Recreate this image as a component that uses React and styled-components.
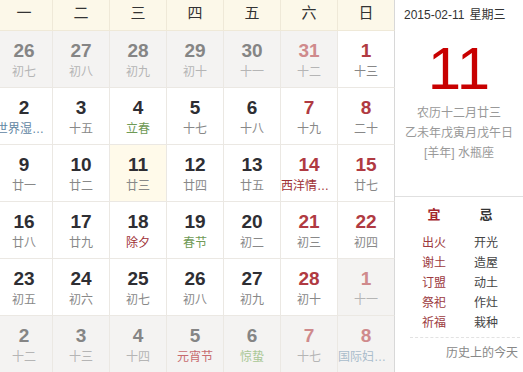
import React from "react";
import styled, { createGlobalStyle } from "styled-components";

const Global = createGlobalStyle`
  html, body { margin: 0; padding: 0; background: #fff; }
  body {
    width: 523px; height: 372px; overflow: hidden;
    font-family: "Liberation Sans", Arial, "Noto Sans CJK SC", sans-serif;
  }
`;

const Page = styled.div`
  display: flex;
  width: 523px;
  height: 372px;
  overflow: hidden;
`;

const Grid = styled.div`
  flex: none;
  margin-left: -4px;
  width: 399px;
  display: grid;
  grid-template-columns: repeat(7, 57px);
  grid-template-rows: 31px repeat(6, 57px);
`;

const HeadCell = styled.div`
  box-sizing: border-box;
  background: #fcf8e9;
  border-right: 1px solid ${(p) => (p.$last ? "#d8d8d8" : "#efe9d8")};
  border-bottom: 1px solid #efe9d8;
  text-align: center;
  font-size: 15px;
  line-height: 25px;
  color: #333;
`;

const DayCell = styled.div`
  box-sizing: border-box;
  background: ${(p) => (p.$today ? "#fffaea" : p.$other ? "#f4f3f2" : "#fff")};
  border-right: 1px solid ${(p) => (p.$last ? "#d8d8d8" : "#ebe8e3")};
  border-bottom: 1px solid #ebe8e3;
  padding-top: 9px;
  text-align: center;
  overflow: hidden;
`;

const Num = styled.div`
  font-size: 19px;
  font-weight: bold;
  line-height: 22px;
  color: ${(p) => p.$color};
`;

const Lunar = styled.div`
  font-size: 12px;
  line-height: 20px;
  color: ${(p) => p.$color};
  white-space: nowrap;
  overflow: hidden;
  text-overflow: ellipsis;
`;

const Side = styled.div`
  flex: none;
  width: 128px;
  display: flex;
  flex-direction: column;
`;

const SideTop = styled.div`
  height: 196px;
  border-bottom: 1px solid #e0e0e0;
  display: flex;
  flex-direction: column;
`;

const DateLine = styled.div`
  margin: 5px 0 0 9px;
  font-size: 12px;
  line-height: 20px;
  color: #333;
  white-space: nowrap;
  span { margin-left: 5px; }
`;

const BigDay = styled.div`
  margin-top: 14px;
  text-align: center;
  font-size: 60px;
  line-height: 60px;
  color: #c80000;
`;

const LunarInfo = styled.div`
  margin-top: 4px;
  text-align: center;
  font-size: 12px;
  line-height: 20px;
  color: #999;
  white-space: nowrap;
`;

const SideBottom = styled.div`
  padding-top: 8px;
  display: flex;
  flex-direction: column;
`;

const YiJi = styled.div`
  display: grid;
  grid-template-columns: 52px 52px;
  padding-left: 13px;
`;

const YiJiHead = styled.div`
  text-align: center;
  font-size: 13px;
  font-weight: bold;
  line-height: 20px;
  margin-bottom: 8px;
  color: ${(p) => p.$color};
`;

const YiJiCol = styled.div`
  display: flex;
  flex-direction: column;
`;

const YiJiItem = styled.div`
  text-align: center;
  font-size: 12px;
  line-height: 20px;
  color: ${(p) => p.$color};
`;

const HistoryLink = styled.div`
  margin: 4px 3px 0 15px;
  border-top: 1px dashed #e2e2e2;
  padding: 5px 2px 0 0;
  text-align: right;
  font-size: 12px;
  line-height: 20px;
  color: #888;
`;

const heads = ["一", "二", "三", "四", "五", "六", "日"];

// kind: n normal, f-blue, f-green, f-red
const weeks = [
  [[26, "初七", 1], [27, "初八", 1], [28, "初九", 1], [29, "初十", 1], [30, "十一", 1], [31, "十二", 1], [1, "十三"]],
  [[2, "世界湿地日", 0, "blue"], [3, "十五"], [4, "立春", 0, "green"], [5, "十七"], [6, "十八"], [7, "十九"], [8, "二十"]],
  [[9, "廿一"], [10, "廿二"], [11, "廿三", 0, null, true], [12, "廿四"], [13, "廿五"], [14, "西洋情人节", 0, "red"], [15, "廿七"]],
  [[16, "廿八"], [17, "廿九"], [18, "除夕", 0, "red"], [19, "春节", 0, "green"], [20, "初二"], [21, "初三"], [22, "初四"]],
  [[23, "初五"], [24, "初六"], [25, "初七"], [26, "初八"], [27, "初九"], [28, "初十"], [1, "十一", 1]],
  [[2, "十二", 1], [3, "十三", 1], [4, "十四", 1], [5, "元宵节", 1, "red"], [6, "惊蛰", 1, "green"], [7, "十七", 1], [8, "国际妇女节", 1, "blue"]],
];

const festColors = {
  cur: { blue: "#5f86a3", green: "#6f9a56", red: "#9e3034" },
  other: { blue: "#a9bccb", green: "#a9c795", red: "#c76b6f" },
};

function numColor(other, weekend) {
  if (other) return weekend ? "#cf8a8c" : "#858585";
  return weekend ? "#b03a42" : "#2e2e33";
}

function lunarColor(other, fest) {
  if (fest) return festColors[other ? "other" : "cur"][fest];
  return other ? "#b5b5b5" : "#888";
}

const yi = ["出火", "谢土", "订盟", "祭祀", "祈福"];
const ji = ["开光", "造屋", "动土", "作灶", "栽种"];

export default function App() {
  return (
    <>
      <Global />
      <Page>
        <Grid>
          {heads.map((h, i) => (
            <HeadCell key={h} $last={i === 6}>{h}</HeadCell>
          ))}
          {weeks.map((w, wi) =>
            w.map(([n, l, other, fest, today], di) => {
              const weekend = di >= 5;
              return (
                <DayCell key={`${wi}-${di}`} $other={!!other} $today={!!today} $last={di === 6}>
                  <Num $color={numColor(!!other, weekend)}>{n}</Num>
                  <Lunar $color={lunarColor(!!other, fest)}>{l}</Lunar>
                </DayCell>
              );
            })
          )}
        </Grid>
        <Side>
          <SideTop>
            <DateLine>2015-02-11<span>星期三</span></DateLine>
            <BigDay>11</BigDay>
            <LunarInfo>
              农历十二月廿三
              <br />
              乙未年戊寅月戊午日
              <br />
              [羊年] 水瓶座
            </LunarInfo>
          </SideTop>
          <SideBottom>
            <YiJi>
              <YiJiCol>
                <YiJiHead $color="#a3262c">宜</YiJiHead>
                {yi.map((t) => (
                  <YiJiItem key={t} $color="#9c3a40">{t}</YiJiItem>
                ))}
              </YiJiCol>
              <YiJiCol>
                <YiJiHead $color="#333">忌</YiJiHead>
                {ji.map((t) => (
                  <YiJiItem key={t} $color="#444">{t}</YiJiItem>
                ))}
              </YiJiCol>
            </YiJi>
            <HistoryLink>历史上的今天</HistoryLink>
          </SideBottom>
        </Side>
      </Page>
    </>
  );
}
